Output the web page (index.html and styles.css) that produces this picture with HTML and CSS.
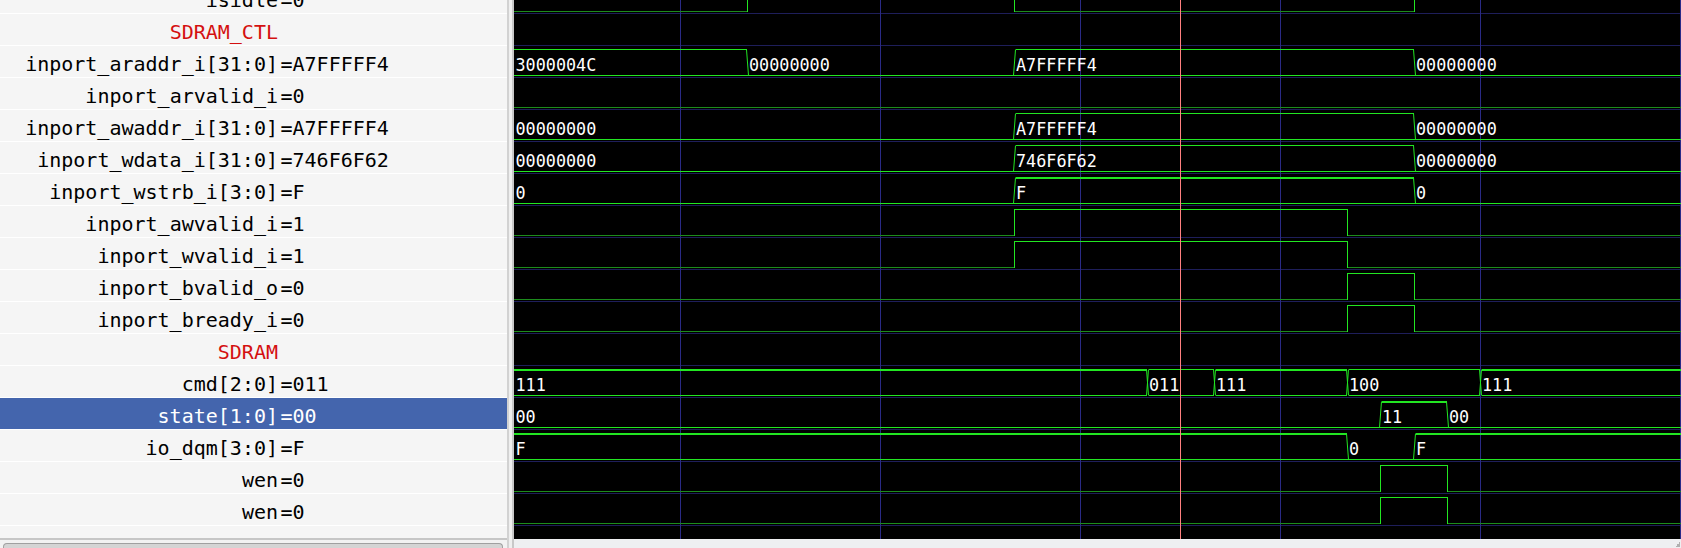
FILE: index.html
```html
<!DOCTYPE html>
<html>
<head>
<meta charset="utf-8">
<link rel="stylesheet" href="styles.css">
</head>
<body>
<div class="app">
  <div class="signals">
    <div class="list">
      <div class="rows">
        <div class="row"><span class="name">isidle</span><span class="val">=0</span></div>
        <div class="row"><span class="name group">SDRAM_CTL</span></div>
        <div class="row"><span class="name">inport_araddr_i[31:0]</span><span class="val">=A7FFFFF4</span></div>
        <div class="row"><span class="name">inport_arvalid_i</span><span class="val">=0</span></div>
        <div class="row"><span class="name">inport_awaddr_i[31:0]</span><span class="val">=A7FFFFF4</span></div>
        <div class="row"><span class="name">inport_wdata_i[31:0]</span><span class="val">=746F6F62</span></div>
        <div class="row"><span class="name">inport_wstrb_i[3:0]</span><span class="val">=F</span></div>
        <div class="row"><span class="name">inport_awvalid_i</span><span class="val">=1</span></div>
        <div class="row"><span class="name">inport_wvalid_i</span><span class="val">=1</span></div>
        <div class="row"><span class="name">inport_bvalid_o</span><span class="val">=0</span></div>
        <div class="row"><span class="name">inport_bready_i</span><span class="val">=0</span></div>
        <div class="row"><span class="name group">SDRAM</span></div>
        <div class="row"><span class="name">cmd[2:0]</span><span class="val">=011</span></div>
        <div class="row selected"><span class="name">state[1:0]</span><span class="val">=00</span></div>
        <div class="row"><span class="name">io_dqm[3:0]</span><span class="val">=F</span></div>
        <div class="row"><span class="name">wen</span><span class="val">=0</span></div>
        <div class="row"><span class="name">wen</span><span class="val">=0</span></div>
        <div class="row"></div>
      </div>
    </div>
    <div class="hscroll"><div class="thumb"></div></div>
  </div>
  <div class="divider"></div>
  <div class="waves">
    <svg class="wavesvg" width="1167" height="539" viewBox="514 0 1167 539" xmlns="http://www.w3.org/2000/svg">
      <rect x="514" y="0" width="1167" height="539" fill="#000"/>
      <path class="sep" d="M514 13.5H1681M514 45.5H1681M514 77.5H1681M514 109.5H1681M514 141.5H1681M514 173.5H1681M514 205.5H1681M514 237.5H1681M514 269.5H1681M514 301.5H1681M514 333.5H1681M514 365.5H1681M514 397.5H1681M514 429.5H1681M514 461.5H1681M514 493.5H1681M514 525.5H1681"/>
      <path class="grid" d="M680.5 0V539M880.5 0V539M1080.5 0V539M1280.5 0V539M1480.5 0V539M1680.5 0V539"/>

      <path class="lo" d="M514 11.5H747M1014 11.5H1414
        M514 107.5H1681
        M514 235.5H1014M1348 235.5H1681
        M514 267.5H1014M1348 267.5H1681
        M514 299.5H1347M1415 299.5H1681
        M514 331.5H1347M1415 331.5H1681
        M514 491.5H1380M1448 491.5H1681
        M514 523.5H1380M1448 523.5H1681"/>
      <path class="hi" d="M747.5 11.5V-14.5H1014.5V11.5M1414.5 11.5V-14.5H1681
        M1014.5 235.5V209.5H1347.5V235.5
        M1014.5 267.5V241.5H1347.5V267.5
        M1347.5 299.5V273.5H1414.5V299.5
        M1347.5 331.5V305.5H1414.5V331.5
        M1380.5 491.5V465.5H1447.5V491.5
        M1380.5 523.5V497.5H1447.5V523.5"/>

      <path class="bus" d="
        M514 49.5H746.5M1015.5 49.5H1413.5M514 75.5H1681
        M1015.5 113.5H1413.5M514 139.5H1681
        M1015.5 145.5H1413.5M514 171.5H1681
        M1015.5 177.5H1413.5M1015.5 178.5H1413.5M514 203.5H1681
        M514 369.5H1146.5M1148.5 369.5H1213.5M1215.5 369.5H1346.5M1348.5 369.5H1479.5M1481.5 369.5H1681
        M514 370.5H1146.5M1215.5 370.5H1346.5M1481.5 370.5H1681
        M514 395.5H1146.5M1148.5 395.5H1213.5M1215.5 395.5H1346.5M1348.5 395.5H1479.5M1481.5 395.5H1681
        M1381.5 401.5H1446.5M1381.5 402.5H1446.5M514 427.5H1681
        M514 433.5H1346.5M1415.5 433.5H1681M514 434.5H1346.5M1415.5 434.5H1681M514 459.5H1681"/>
      <path class="trans" d="
        M746.5 49.5L748.5 75.5M1013.5 75.5L1015.5 49.5M1413.5 49.5L1415.5 75.5
        M1013.5 139.5L1015.5 113.5M1413.5 113.5L1415.5 139.5
        M1013.5 171.5L1015.5 145.5M1413.5 145.5L1415.5 171.5
        M1013.5 203.5L1015.5 177.5M1413.5 177.5L1415.5 203.5
        M1146.5 369.5L1148.5 395.5M1146.5 395.5L1148.5 369.5
        M1213.5 369.5L1215.5 395.5M1213.5 395.5L1215.5 369.5
        M1346.5 369.5L1348.5 395.5M1346.5 395.5L1348.5 369.5
        M1479.5 369.5L1481.5 395.5M1479.5 395.5L1481.5 369.5
        M1379.5 427.5L1381.5 401.5M1446.5 401.5L1448.5 427.5
        M1346.5 433.5L1348.5 459.5M1413.5 459.5L1415.5 433.5"/>

      <g class="vtext">
        <text x="515.5" y="71">3000004C</text>
        <text x="749" y="71">00000000</text>
        <text x="1016" y="71">A7FFFFF4</text>
        <text x="1416" y="71">00000000</text>

        <text x="515.5" y="135">00000000</text>
        <text x="1016" y="135">A7FFFFF4</text>
        <text x="1416" y="135">00000000</text>

        <text x="515.5" y="167">00000000</text>
        <text x="1016" y="167">746F6F62</text>
        <text x="1416" y="167">00000000</text>

        <text x="515.5" y="199">0</text>
        <text x="1016" y="199">F</text>
        <text x="1416" y="199">0</text>

        <text x="515.5" y="391">111</text>
        <text x="1149" y="391">011</text>
        <text x="1216" y="391">111</text>
        <text x="1349" y="391">100</text>
        <text x="1482" y="391">111</text>

        <text x="515.5" y="423">00</text>
        <text x="1382" y="423">11</text>
        <text x="1449" y="423">00</text>

        <text x="515.5" y="455">F</text>
        <text x="1349" y="455">0</text>
        <text x="1416" y="455">F</text>
      </g>

      <path class="cursor" d="M1180.5 0V539"/>
    </svg>
    <div class="wstrip"><span class="grip"></span></div>
  </div>
</div>
</body>
</html>
```
FILE: styles.css
```css
html, body {
  margin: 0;
  padding: 0;
  width: 1681px;
  height: 548px;
  overflow: hidden;
  background: #f5f5f5;
}

.app {
  display: flex;
  width: 1681px;
  height: 548px;
}

.signals {
  width: 507px;
  flex: none;
  display: flex;
  flex-direction: column;
  background: #f5f5f5;
}

.list {
  height: 538px;
  overflow: hidden;
}

.rows {
  margin-top: -19px;
}

.row {
  height: 26px;
  line-height: 26px;
  padding-top: 5px;
  border-top: 1px solid #ffffff;
  white-space: nowrap;
  font-family: "DejaVu Sans Mono", monospace;
  font-size: 20px;
  color: #000;
  display: flex;
}

.row.selected {
  background: #4465ad;
  color: #fff;
}

.name {
  display: block;
  width: 278px;
  flex: none;
  text-align: right;
}

.name.group {
  color: #d41010;
}

.val {
  display: block;
  margin-left: 2.5px;
}

.hscroll {
  height: 10px;
  border-top: 2px solid #c6c6c6;
  background: #f2f2f2;
  padding-top: 3px;
  box-sizing: border-box;
}

.thumb {
  margin-left: 3px;
  width: 500px;
  height: 6px;
  box-sizing: border-box;
  border: 1px solid #a0a0a0;
  border-bottom: none;
  border-radius: 4px 4px 0 0;
  background: #d4d4d4;
}

.divider {
  width: 7px;
  flex: none;
  background: linear-gradient(to right, #d2d2d2 0, #d2d2d2 2px, #efefef 2px, #efefef 5px, #c8c8c8 5px, #c8c8c8 7px);
}

.waves {
  width: 1167px;
  flex: none;
  display: flex;
  flex-direction: column;
}

.wavesvg {
  display: block;
}

.wstrip {
  height: 9px;
  background: #eeeff1;
  position: relative;
}

.grip {
  position: absolute;
  right: 1px;
  bottom: 1px;
  width: 5px;
  height: 5px;
  background: linear-gradient(135deg, transparent 50%, #b0b0b0 50%);
}

.sep {
  stroke: #1e1e5a;
  stroke-width: 1;
  fill: none;
  shape-rendering: crispEdges;
}

.grid {
  stroke: #2a2a86;
  stroke-width: 1;
  fill: none;
  shape-rendering: crispEdges;
}

.lo {
  stroke: #1c8c1c;
  stroke-width: 1;
  fill: none;
  shape-rendering: crispEdges;
}

.hi {
  stroke: #22e622;
  stroke-width: 1;
  fill: none;
  shape-rendering: crispEdges;
}

.bus {
  stroke: #22e622;
  stroke-width: 1;
  fill: none;
  shape-rendering: crispEdges;
}

.trans {
  stroke: #22e622;
  stroke-width: 1;
  fill: none;
}

.vtext text {
  font-family: "DejaVu Sans Mono", monospace;
  font-size: 16.8px;
  fill: #ffffff;
}

.cursor {
  stroke: #ff8080;
  stroke-width: 1;
  fill: none;
  shape-rendering: crispEdges;
}
```
